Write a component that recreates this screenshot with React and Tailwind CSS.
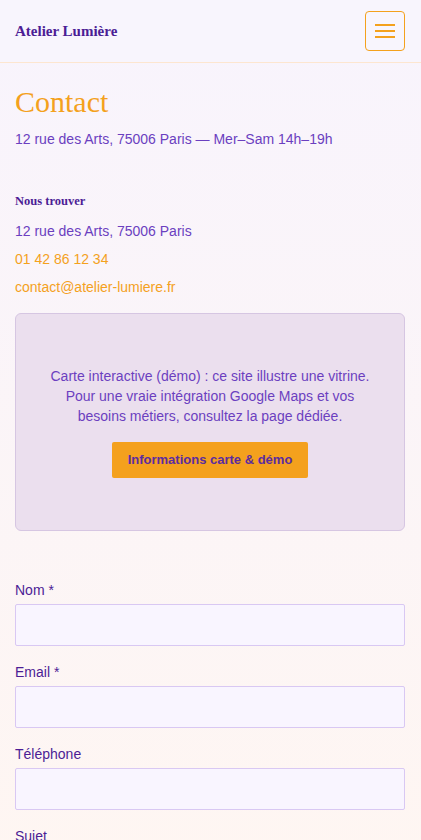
import React from "react";

const sans = { fontFamily: '"Liberation Sans", Arial, sans-serif' };
const serif = { fontFamily: '"Liberation Serif", "Times New Roman", serif' };

function Field({ label }) {
  return (
    <div className="flex flex-col">
      <label className="text-[14px] leading-5 text-[#4c1d95] mb-1">{label}</label>
      <input
        className="h-[42px] w-full rounded-[2px] border border-[#d9c8f3] bg-[#f9f5ff] px-3 outline-none"
        type="text"
      />
    </div>
  );
}

export default function App() {
  return (
    <div
      className="min-h-[840px] w-full bg-gradient-to-b from-[#f8f4fd] to-[#fff6f1]"
      style={sans}
    >
      <header className="flex h-[63px] items-center justify-between border-b border-[#fde6d0] bg-[#f8f5fd] pl-[15px] pr-[16px]">
        <div className="text-[15px] font-bold text-[#4c1d95]" style={serif}>
          Atelier Lumière
        </div>
        <button className="flex h-[40px] w-[40px] flex-col items-center justify-center gap-[4px] rounded-[4px] border border-[#f4a11d]">
          <span className="block h-[2px] w-[20px] bg-[#f4a11d]" />
          <span className="block h-[2px] w-[20px] bg-[#f4a11d]" />
          <span className="block h-[2px] w-[20px] bg-[#f4a11d]" />
        </button>
      </header>

      <main className="pl-[15px] pr-[16px]">
        <h1 className="mt-[21px] text-[30px] leading-[36px] text-[#f4a11d]" style={serif}>
          Contact
        </h1>
        <p className="mt-[9px] text-[14px] leading-5 text-[#6b3fc0]">
          12 rue des Arts, 75006 Paris — Mer–Sam 14h–19h
        </p>

        <h2 className="mt-[42px] text-[12.5px] font-bold leading-5 text-[#4c1d95]" style={serif}>
          Nous trouver
        </h2>
        <p className="mt-[10px] text-[14px] leading-5 text-[#6b3fc0]">12 rue des Arts, 75006 Paris</p>
        <p className="mt-[8px] text-[14px] leading-5 text-[#f4a11d]">01 42 86 12 34</p>
        <p className="mt-[8px] text-[14px] leading-5 text-[#f4a11d]">contact@atelier-lumiere.fr</p>

        <div className="mt-[16px] flex h-[218px] flex-col items-center justify-center rounded-[6px] border border-[#d6c6e2] bg-[#ebdfee] px-8 text-center">
          <p className="text-[14px] leading-5 text-[#6b3fc0]">
            Carte interactive (démo) : ce site illustre une vitrine. Pour une vraie intégration Google Maps et vos besoins métiers, consultez la page dédiée.
          </p>
          <button className="mt-[16px] h-[36px] w-[196px] rounded-[2px] bg-[#f4a11d] text-[13px] font-bold text-[#5b2ca0]">
            Informations carte &amp; démo
          </button>
        </div>

        <form className="mt-[49px] flex flex-col gap-[16px] pb-10">
          <Field label="Nom *" />
          <Field label="Email *" />
          <Field label="Téléphone" />
          <Field label="Sujet" />
        </form>
      </main>
    </div>
  );
}
